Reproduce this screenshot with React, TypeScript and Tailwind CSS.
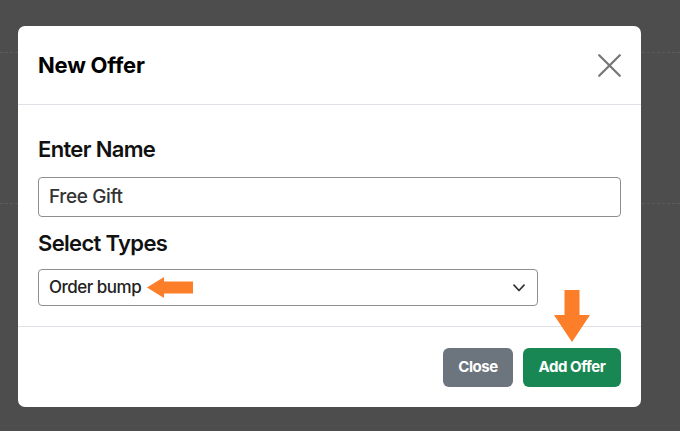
import React from "react";

export default function App() {
  return (
    <div className="w-[680px] h-[431px] bg-[#4d4d4d] overflow-hidden relative" style={{ fontFamily: "Inter, 'Liberation Sans', sans-serif" }}>
      <div className="absolute left-0 right-0 top-[52px] border-t border-dashed border-[#5c5c5c]" />
      <div className="absolute left-0 right-0 top-[203px] border-t border-dashed border-[#5c5c5c]" />
      <div className="relative ml-[18px] mt-[26px] w-[623px] h-[381px] bg-white rounded-[7px] flex flex-col">
        <div className="h-[79px] border-b border-[#dee2e6] flex items-center justify-between pl-[20px] pr-[20px]">
          <h1 className="text-[22px] font-bold text-black tracking-[-0.01em] leading-none">New Offer</h1>
          <svg width="23" height="23" viewBox="0 0 23 23">
            <path d="M1.2 1.2 L21.8 21.8 M21.8 1.2 L1.2 21.8" stroke="#767676" strokeWidth="2.2" strokeLinecap="round" />
          </svg>
        </div>
        <div className="flex-1 px-[20px] pt-[33px] border-b border-[#dee2e6]">
          <div className="text-[22px] font-semibold text-[#111] tracking-[-0.03em] leading-none">Enter Name</div>
          <div className="mt-[17px] h-[40px] w-[583px] border border-[#8e8e8e] rounded-[4px] flex items-center pl-[10px] text-[19px] font-medium text-[#333] tracking-[-0.02em]">Free Gift</div>
          <div className="mt-[15px] text-[22px] font-semibold text-[#111] tracking-[-0.03em] leading-none">Select Types</div>
          <div className="mt-[15px] h-[37px] w-[500px] border border-[#8e8e8e] rounded-[4px] flex items-center pl-[10px] pr-[12px]">
            <span className="text-[17px] font-medium text-[#222] tracking-[-0.03em]">Order bump</span>
            <svg width="46" height="21" viewBox="0 0 46 21" className="ml-[6px]">
              <path d="M0 10.5 L17 0 L17 4.5 L46 4.5 L46 16.5 L17 16.5 L17 21 Z" fill="#fd7e29" />
            </svg>
            <svg width="12" height="8" viewBox="0 0 12 8" className="ml-auto">
              <path d="M1 1.2 L6 6.5 L11 1.2" fill="none" stroke="#333" strokeWidth="1.7" strokeLinecap="round" strokeLinejoin="round" />
            </svg>
          </div>
        </div>
        <div className="h-[80px] flex items-center justify-end gap-[10px] pr-[20px] relative">
          <svg width="36" height="52" viewBox="0 0 36 52" className="absolute left-[536px] top-[-37px]">
            <path d="M10.5 0 L25.5 0 L25.5 25 L36 25 L18 52 L0 25 L10.5 25 Z" fill="#fd7e29" />
          </svg>
          <button className="h-[39px] w-[70px] rounded-[6px] bg-[#6c757d] text-white text-[15px] font-bold tracking-[-0.03em]">Close</button>
          <button className="h-[39px] w-[98px] rounded-[6px] bg-[#198754] text-white text-[15px] font-bold tracking-[-0.03em]">Add Offer</button>
        </div>
      </div>
    </div>
  );
}
